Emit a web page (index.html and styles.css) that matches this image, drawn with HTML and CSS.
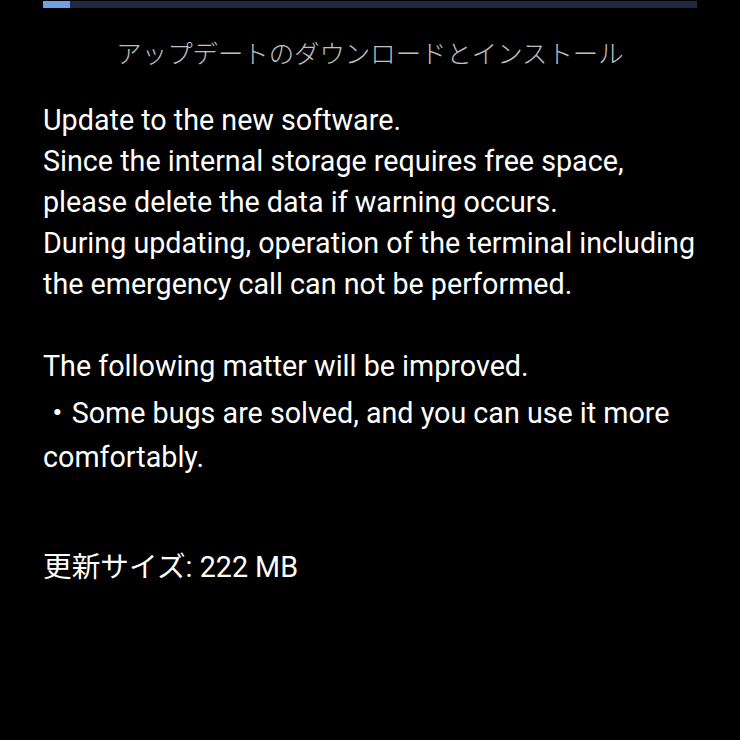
FILE: index.html
```html
<html>
  <head>
    <title>Software update</title>
    <link rel="stylesheet" href="styles.css">
  </head>
  <body>
    <div class="progress"><div class="progress-fill"></div></div>

    <h1 class="title">アップデートのダウンロードとインストール</h1>

    <div class="notes">
      <p>
        Update to the new software.<br>
        Since the internal storage requires free space,<br>
        please delete the data if warning occurs.<br>
        During updating, operation of the terminal including<br>
        the emergency call can not be performed.
      </p>
      <p class="improved">The following matter will be improved.</p>
      <p class="bullet">・Some bugs are solved, and you can use it more comfortably.</p>
    </div>

    <p class="size">更新サイズ: 222 MB</p>
  </body>
</html>
```

FILE: styles.css
```css
body {
  margin: 0;
  padding: 0 43px;
  background: #000;
  color: #fff;
  font-family: Roboto, "Noto Sans CJK JP", sans-serif;
  font-size: 28.7px;
}

.progress {
  margin-top: 1px;
  height: 7px;
  background: #1e2a44;
}

.progress-fill {
  width: 27px;
  height: 100%;
  background: #6f9fe6;
}

.title {
  margin: 28px 0 0;
  text-align: center;
  font-size: 25.4px;
  font-weight: 300;
  color: #c0c0c0;
  line-height: 36px;
}

.notes {
  margin-top: 28px;
}

.notes p {
  margin: 0;
  line-height: 41px;
}

.notes .improved {
  margin-top: 41px;
}

.notes .bullet {
  margin-top: 4px;
  line-height: 44px;
}

.size {
  margin: 68px 0 0;
  line-height: 41px;
}
```
